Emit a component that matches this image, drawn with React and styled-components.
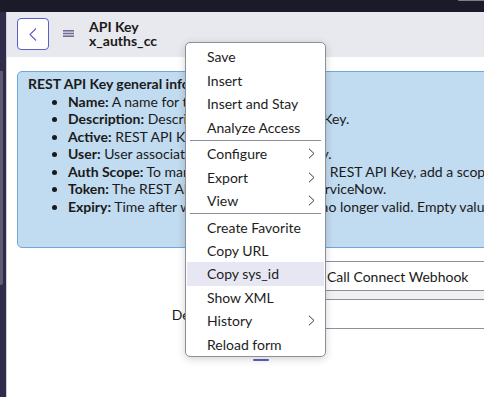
import React from 'react';
import styled, { createGlobalStyle } from 'styled-components';

const Global = createGlobalStyle`
  html, body { margin: 0; padding: 0; overflow: hidden; background: #fff; }
  body { font-family: Lato, "Noto Sans", sans-serif; color: #1c1c1c; font-size: 14px; }
`;

const Shell = styled.div`
  position: relative;
  width: 484px;
  height: 397px;
  overflow: hidden;
  display: flex;
  flex-direction: column;
`;
const TopBar = styled.div`
  height: 12px;
  flex-shrink: 0;
  background: #1b1a29;
  display: flex;
  justify-content: flex-end;
`;
const TopBarEdge = styled.div`
  width: 26px;
  height: 1px;
  background: #7d7c8a;
  border-radius: 1px 0 0 1px;
`;
const Body = styled.div`
  flex: 1;
  display: flex;
  min-height: 0;
`;
const Sidebar = styled.div`
  width: 6px;
  flex-shrink: 0;
  background: #2f2b4a;
  border-right: 1px solid #cfcfd6;
`;
const SidebarThumb = styled.div`
  width: 3px;
  height: 214px;
  margin-top: 59px;
  background: #5e5b72;
  border-radius: 0 0 2px 0;
`;
const Main = styled.div`
  flex: 1;
  min-width: 0;
  overflow: hidden;
  display: flex;
  flex-direction: column;
`;
const Header = styled.div`
  height: 45px;
  flex-shrink: 0;
  box-sizing: border-box;
  background: #e8e9ee;
  display: flex;
  align-items: flex-start;
  padding: 6px 0 0 10px;
`;
const BackButton = styled.button`
  width: 32px;
  height: 32px;
  box-sizing: border-box;
  border: 1px solid #5b5fc7;
  border-radius: 4px;
  background: #fff;
  padding: 0;
  display: flex;
  align-items: center;
  justify-content: center;
  margin-right: 14px;
`;
const Hamburger = styled.svg`
  margin-top: 12px;
  margin-right: 15px;
  flex-shrink: 0;
`;
const TitleBlock = styled.div`
  margin-top: 2px;
  font-weight: 700;
  font-size: 14px;
  line-height: 13.5px;
  color: #1a1a1a;
`;
const Content = styled.div`
  padding: 14px 0 0 10px;
`;
const InfoBox = styled.div`
  width: 620px;
  box-sizing: border-box;
  background: #c1dbf0;
  border: 1px solid #6fa7dd;
  border-radius: 5px;
  padding: 3px 10px 32px;
  line-height: 17.5px;
  font-size: 14px;
  color: #1a1a1a;
`;
const InfoTitle = styled.div`
  font-weight: 700;
`;
const InfoList = styled.ul`
  margin: 0;
  padding-left: 40px;
  white-space: nowrap;
`;
const Term = styled.b`
  font-weight: 700;
`;
const Form = styled.div`
  margin-top: 13px;
  display: grid;
  grid-template-columns: 226px 700px;
  column-gap: 10px;
  row-gap: 8px;
`;
const FieldLabel = styled.div`
  text-align: right;
  align-self: center;
  font-size: 14px;
  color: #1a1a1a;
`;
const Field = styled.div`
  height: 30px;
  box-sizing: border-box;
  border: 1px solid #8d909a;
  border-radius: 3px;
  padding: 0 10px;
  display: flex;
  align-items: center;
  font-size: 14px;
  color: #1a1a1a;
  white-space: nowrap;
  box-shadow: ${p => (p.$band ? '0 8px 0 0 #f1f1f3' : 'none')};
`;
const FocusMark = styled.div`
  width: 16px;
  height: 2px;
  border-radius: 1px;
  background: #5a5fc8;
  margin-top: 22px;
`;
const Menu = styled.div`
  position: absolute;
  left: 185px;
  top: 42px;
  width: 141px;
  height: 315px;
  box-sizing: border-box;
  background: #fff;
  border: 1px solid #8b8f99;
  border-radius: 5px;
  box-shadow: 0 2px 8px rgba(0, 0, 0, 0.18);
  padding-top: 2.3px;
  font-size: 14px;
  color: #1d1d1d;
`;
const MenuItem = styled.div`
  height: 23.4px;
  margin: 0 1px;
  padding: 0 9px 0 20px;
  display: flex;
  align-items: center;
  justify-content: space-between;
  white-space: nowrap;
  background: ${p => (p.$active ? '#e7e7f4' : 'transparent')};
`;
const MenuDivider = styled.div`
  height: 1px;
  margin: 1.1px 4px;
  background: #8b8f99;
`;

const Chevron = () => (
  <svg width="7" height="11" viewBox="0 0 7 11">
    <polyline points="1,0.8 6,5.5 1,10.2" fill="none" stroke="#3a3a3a" strokeWidth="1" />
  </svg>
);

const menuGroups = [
  [{ label: 'Save' }, { label: 'Insert' }, { label: 'Insert and Stay' }, { label: 'Analyze Access' }],
  [{ label: 'Configure', sub: true }, { label: 'Export', sub: true }, { label: 'View', sub: true }],
  [
    { label: 'Create Favorite' },
    { label: 'Copy URL' },
    { label: 'Copy sys_id', active: true },
    { label: 'Show XML' },
    { label: 'History', sub: true },
    { label: 'Reload form' },
  ],
];

const info = [
  ['Name:', 'A name for the REST API Key.'],
  ['Description:', 'Description of the REST API Key.'],
  ['Active:', 'REST API Key is active.'],
  ['User:', 'User associated with a REST API Key.'],
  ['Auth Scope:', 'To manage the access for this REST API Key, add a scope to restrict access.'],
  ['Token:', 'The REST API Key generated by ServiceNow.'],
  ['Expiry:', 'Time after which the API token is no longer valid. Empty value means the token never expires.'],
];

export default function App() {
  return (
    <>
      <Global />
      <Shell>
        <TopBar>
          <TopBarEdge />
        </TopBar>
        <Body>
          <Sidebar>
            <SidebarThumb />
          </Sidebar>
          <Main>
            <Header>
              <BackButton aria-label="Back">
                <svg width="8" height="13" viewBox="0 0 8 13">
                  <polyline points="7,0.5 1,6.5 7,12.5" fill="none" stroke="#5b5fc7" strokeWidth="1.1" />
                </svg>
              </BackButton>
              <Hamburger width="11" height="7" viewBox="0 0 11 7">
                <rect x="0" y="0" width="11" height="1.6" fill="#6e6f98" />
                <rect x="0" y="2.7" width="11" height="1.6" fill="#6e6f98" />
                <rect x="0" y="5.4" width="11" height="1.6" fill="#6e6f98" />
              </Hamburger>
              <TitleBlock>
                <div>API Key</div>
                <div>x_auths_cc</div>
              </TitleBlock>
            </Header>
            <Content>
              <InfoBox>
                <InfoTitle>REST API Key general information</InfoTitle>
                <InfoList>
                  {info.map(([t, d]) => (
                    <li key={t}>
                      <Term>{t}</Term> {d}
                    </li>
                  ))}
                </InfoList>
              </InfoBox>
              <Form>
                <FieldLabel>Name</FieldLabel>
                <Field $band>Auths.io - Call Connect Webhook</Field>
                <FieldLabel>Description</FieldLabel>
                <Field />
                <FieldLabel />
                <FocusMark />
              </Form>
            </Content>
          </Main>
        </Body>
        <Menu>
          {menuGroups.map((g, gi) => (
            <React.Fragment key={gi}>
              {gi > 0 && <MenuDivider />}
              {g.map(it => (
                <MenuItem key={it.label} $active={it.active}>
                  <span>{it.label}</span>
                  {it.sub && <Chevron />}
                </MenuItem>
              ))}
            </React.Fragment>
          ))}
        </Menu>
      </Shell>
    </>
  );
}
